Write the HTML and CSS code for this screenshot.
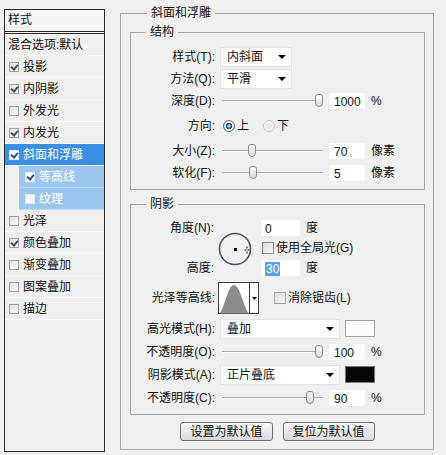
FILE: index.html
```html
<!DOCTYPE html>
<html lang="zh-CN">
<head>
    <meta charset="UTF-8">
    <meta name="viewport" content="width=device-width, initial-scale=1.0">
    <title>图层样式 - 斜面和浮雕</title>
    <link rel="stylesheet" href="styles.css">
</head>
<body>

    <div class="dialog">

        <!-- left: list of layer effects -->
        <div class="styles-panel">
            <div class="panel-head">样式</div>
            <ul class="style-list">
                <li class="style-item plain">混合选项:默认</li>
                <li class="style-item"><span class="tick on"></span>投影</li>
                <li class="style-item"><span class="tick on"></span>内阴影</li>
                <li class="style-item"><span class="tick"></span>外发光</li>
                <li class="style-item"><span class="tick on"></span>内发光</li>
                <li class="style-item selected"><span class="tick on"></span>斜面和浮雕</li>
                <li class="style-item sub"><span class="tick on"></span>等高线</li>
                <li class="style-item sub"><span class="tick"></span>纹理</li>
                <li class="style-item"><span class="tick"></span>光泽</li>
                <li class="style-item"><span class="tick on"></span>颜色叠加</li>
                <li class="style-item"><span class="tick"></span>渐变叠加</li>
                <li class="style-item"><span class="tick"></span>图案叠加</li>
                <li class="style-item"><span class="tick"></span>描边</li>
            </ul>
        </div>

        <!-- right: bevel & emboss settings -->
        <fieldset class="group main">
            <legend>斜面和浮雕</legend>

            <fieldset class="group inner structure">
                <legend>结构</legend>

                <div class="row">
                    <span class="lbl">样式(T):</span>
                    <div class="select short"><span>内斜面</span><i class="caret"></i></div>
                </div>
                <div class="row">
                    <span class="lbl">方法(Q):</span>
                    <div class="select short"><span>平滑</span><i class="caret"></i></div>
                </div>
                <div class="row">
                    <span class="lbl">深度(D):</span>
                    <div class="slider"><div class="rail"><i class="knob" style="left: 100%"></i></div></div>
                    <span class="num">1000</span>
                    <span class="unit">%</span>
                </div>
                <div class="row tall">
                    <span class="lbl">方向:</span>
                    <span class="radio on"></span><span class="radio-text">上</span>
                    <span class="radio off"></span><span class="radio-text">下</span>
                </div>
                <div class="row">
                    <span class="lbl">大小(Z):</span>
                    <div class="slider"><div class="rail"><i class="knob" style="left: 28%"></i></div></div>
                    <span class="num">70</span>
                    <span class="unit">像素</span>
                </div>
                <div class="row">
                    <span class="lbl">软化(F):</span>
                    <div class="slider"><div class="rail"><i class="knob" style="left: 29%"></i></div></div>
                    <span class="num">5</span>
                    <span class="unit">像素</span>
                </div>
            </fieldset>

            <fieldset class="group inner shading">
                <legend>阴影</legend>

                <div class="angle">
                    <span class="lbl a-top">角度(N):</span>
                    <div class="dial">
                        <svg width="34" height="34" viewBox="0 0 34 34">
                            <circle cx="17" cy="17" r="15.5" fill="none" stroke="#4b5263" stroke-width="1.6"/>
                            <rect x="16" y="16" width="3" height="3" fill="#000"/>
                            <path d="M29 14.5v2M29 19.5v2M26.5 18h2M29.5 18h2" stroke="#222" stroke-width="1"/>
                        </svg>
                    </div>
                    <div class="a-field"><span class="num wide">0</span><span class="unit">度</span></div>
                    <div class="a-field"><span class="box"></span><span class="check-text">使用全局光(G)</span></div>
                    <span class="lbl a-bottom">高度:</span>
                    <div class="a-field"><span class="num wide"><span class="sel">30</span></span><span class="unit">度</span></div>
                </div>

                <div class="row contour-row">
                    <span class="lbl">光泽等高线:</span>
                    <svg class="contour" width="41" height="32" viewBox="0 0 41 32">
                        <rect x="0.5" y="0.5" width="40" height="31" fill="#fff" stroke="#3c3c3c"/>
                        <path d="M2 31.5C7 24 10 3 16 3C22 3 25 24 31 31.5Z" fill="#8b8b8b"/>
                        <line x1="31.5" y1="0.5" x2="31.5" y2="31.5" stroke="#3c3c3c"/>
                        <path d="M34 15h5l-2.5 3z" fill="#000"/>
                    </svg>
                    <span class="box smooth"></span><span class="check-text">消除锯齿(L)</span>
                </div>

                <div class="row mode">
                    <span class="lbl">高光模式(H):</span>
                    <div class="select long"><span>叠加</span><i class="caret"></i></div>
                    <span class="swatch light"></span>
                </div>
                <div class="row mode">
                    <span class="lbl">不透明度(O):</span>
                    <div class="slider"><div class="rail"><i class="knob" style="left: 100%"></i></div></div>
                    <span class="num">100</span>
                    <span class="unit">%</span>
                </div>
                <div class="row mode">
                    <span class="lbl">阴影模式(A):</span>
                    <div class="select long"><span>正片叠底</span><i class="caret"></i></div>
                    <span class="swatch dark"></span>
                </div>
                <div class="row mode">
                    <span class="lbl">不透明度(C):</span>
                    <div class="slider"><div class="rail"><i class="knob" style="left: 90%"></i></div></div>
                    <span class="num">90</span>
                    <span class="unit">%</span>
                </div>
            </fieldset>

            <div class="buttons">
                <button class="btn">设置为默认值</button>
                <button class="btn">复位为默认值</button>
            </div>
        </fieldset>

    </div>

</body>
</html>
```

FILE: styles.css
```css
/* Global Styles */
body {
    margin: 0;
    padding: 0;
    background: #f0f0f0;
    color: #111;
    font-family: "Liberation Sans", "Noto Sans CJK SC", sans-serif;
    font-size: 12px;
    line-height: 16px;
}

.dialog {
    display: flex;
    align-items: flex-start;
    width: 446px;
    height: 455px;
}

/* Effects list */
.styles-panel {
    box-sizing: border-box;
    width: 101px;
    height: 443px;
    margin: 9px 0 0 4px;
    border: 1px solid #2a2a2a;
    background: #f0f0f0;
}

.panel-head {
    height: 21px;
    line-height: 21px;
    padding-left: 3px;
    background: #f5f5f5;
    border-bottom: 3px double #2a2a2a;
}

.style-list {
    list-style: none;
    margin: 0;
    padding: 0;
}

.style-item {
    display: flex;
    align-items: center;
    height: 21px;
    padding-left: 4px;
    border-bottom: 1px solid #fbfbfb;
}

.style-item.plain {
    padding-left: 3px;
}

.style-item.selected {
    background: #3a8ee4;
    color: #fff;
}

.style-item.sub {
    margin-left: 14px;
    padding-left: 6px;
    background: #9cc6ee;
    color: #fff;
    border-bottom-color: #b9d8f3;
}

.tick {
    position: relative;
    box-sizing: border-box;
    width: 10px;
    height: 10px;
    margin-right: 4px;
    border: 1px solid #a3a3a3;
    background: linear-gradient(135deg, #e2e2e2, #fafafa);
    flex: none;
}

.tick.on::after {
    content: "";
    position: absolute;
    left: 2px;
    top: 0;
    width: 3px;
    height: 5px;
    border: solid #3a4d78;
    border-width: 0 2px 2px 0;
    transform: rotate(40deg);
}

.selected .tick,
.sub .tick {
    border-color: #dfe9f5;
    background: #f4f7fb;
}

/* Group boxes */
.group {
    margin: 0;
    padding: 0;
    border: 1px solid #a6a6a6;
    min-width: 0;
}

.group legend {
    padding: 0 4px;
    line-height: 16px;
}

.main {
    box-sizing: border-box;
    width: 314px;
    margin: 5px 0 0 15px;
    padding: 0 8px 8px 9px;
}

.main > legend {
    margin-left: 17px;
}

.inner > legend {
    margin-left: 15px;
}

.structure {
    margin-top: 3px;
    padding: 6px 0 5px;
}

.shading {
    margin-top: 6px;
    padding: 6px 0 5px;
}

/* Rows */
.row {
    display: flex;
    align-items: center;
    height: 22px;
}

.row.tall {
    height: 28px;
}

.row.mode {
    height: 23px;
}

.lbl {
    width: 84px;
    margin-right: 5px;
    text-align: right;
    flex: none;
}

.select {
    box-sizing: border-box;
    display: flex;
    justify-content: space-between;
    align-items: center;
    height: 20px;
    padding: 0 5px 0 6px;
    background: #fff;
    border: 1px solid #e2e2e2;
}

.select.short {
    width: 72px;
}

.select.long {
    width: 120px;
}

.caret {
    width: 0;
    height: 0;
    border-top: 4px solid #000;
    border-left: 4px solid transparent;
    border-right: 4px solid transparent;
}

/* Sliders */
.slider {
    position: relative;
    box-sizing: border-box;
    width: 104px;
    height: 14px;
    padding: 0 5px 0 6px;
}

.slider::before {
    content: "";
    position: absolute;
    left: 2px;
    right: 1px;
    top: 6px;
    height: 1px;
    background: #a9a9a9;
    border-bottom: 1px solid #fff;
}

.rail {
    position: relative;
    height: 100%;
}

.knob {
    position: absolute;
    top: 0;
    box-sizing: border-box;
    width: 8px;
    height: 13px;
    margin-left: -4px;
    border: 1px solid #8c8c8c;
    border-radius: 3px 3px 4px 4px;
    background: linear-gradient(#fdfdfd, #d9d9d9);
}

.num {
    box-sizing: border-box;
    width: 38px;
    height: 18px;
    margin-left: 4px;
    padding-left: 5px;
    line-height: 18px;
    background: #fff;
    border: 1px solid #ececec;
}

.num.wide {
    width: 41px;
    margin-left: 0;
    padding-left: 4px;
}

.unit {
    margin-left: 5px;
}

/* Radios and checkboxes */
.radio {
    box-sizing: border-box;
    width: 12px;
    height: 12px;
    border-radius: 50%;
    flex: none;
}

.radio.on {
    margin-left: 3px;
    border: 1px solid #5e7286;
    background: radial-gradient(circle, #bfe3f2 0 1px, #1f5a80 2px 3px, #e9eef2 3.5px);
}

.radio.off {
    margin-left: 14px;
    border: 1px solid #c4c4c4;
    background: radial-gradient(circle, #e8e8e8 0 3px, #f6f6f6 4px);
}

.radio-text {
    margin-left: 2px;
}

.box {
    box-sizing: border-box;
    width: 12px;
    height: 12px;
    margin-right: 2px;
    border: 1px solid #8e8e8e;
    background: linear-gradient(135deg, #dcdcdc, #f7f7f7);
    flex: none;
}

.box.smooth {
    margin-left: 15px;
    border-color: #a5a5a5;
}

/* Angle / altitude block */
.angle {
    display: grid;
    grid-template-columns: 84px 45px auto;
    grid-template-rows: 20px 20px 20px;
    align-items: center;
}

.angle .lbl {
    width: auto;
    margin-right: 1px;
}

.a-top {
    grid-column: 1;
    grid-row: 1;
}

.a-bottom {
    grid-column: 1;
    grid-row: 3;
}

.dial {
    grid-column: 2;
    grid-row: 1 / 4;
    height: 34px;
    margin: 2px 0 0 3px;
}

.a-field {
    grid-column: 3;
    display: flex;
    align-items: center;
}

.a-field .box {
    margin-left: 2px;
}

.sel {
    background: #5ba2e6;
    color: #fff;
    padding: 0 1px;
}

.contour-row {
    height: 39px;
}

.contour {
    margin-left: -2px;
    flex: none;
}

/* Colour swatches */
.swatch {
    box-sizing: border-box;
    width: 30px;
    height: 17px;
    margin-left: 5px;
    border: 1px solid #a3a3a3;
}

.swatch.light {
    background: #fbfbfb;
}

.swatch.dark {
    background: #060606;
    border-color: #7a7a7a;
}

/* Buttons */
.buttons {
    display: flex;
    justify-content: center;
    gap: 10px;
    margin-top: 7px;
}

.btn {
    height: 19px;
    padding: 0 9px;
    font-family: inherit;
    font-size: 12px;
    line-height: 16px;
    color: #111;
    border: 1px solid #6f6f6f;
    border-radius: 3px;
    background: linear-gradient(#f7f7f7, #dadada);
    cursor: pointer;
}

.btn:hover {
    background: linear-gradient(#eaf5fc, #cfe6f6);
}
```
